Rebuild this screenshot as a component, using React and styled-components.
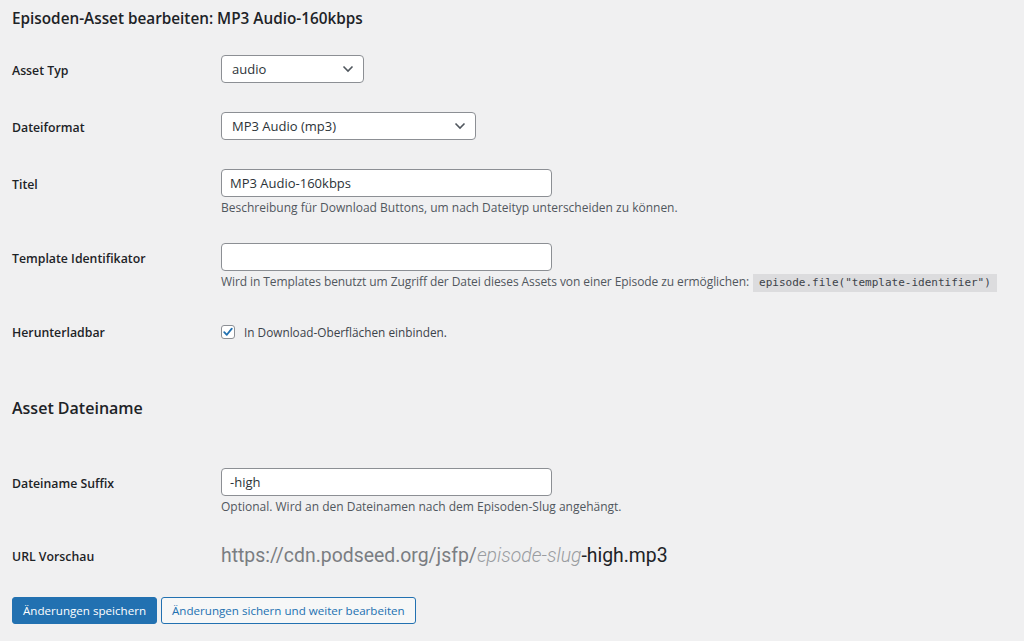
import React from "react";
import styled, { createGlobalStyle } from "styled-components";

const GlobalStyle = createGlobalStyle`
  html, body {
    margin: 0;
    padding: 0;
    background: #f0f0f1;
  }
  body {
    font-family: "Open Sans", "Noto Sans", sans-serif;
    font-size: 13px;
    color: #1d2327;
  }
`;

const Page = styled.div`
  padding: 6px 12px 20px 12px;
`;

const Title = styled.h1`
  margin: 0;
  font-size: 15.3px;
  line-height: 24px;
  font-weight: 600;
  color: #1d2327;
`;

const SectionTitle = styled.h2`
  margin: ${(p) => p.$gap}px 0 0 0;
  font-size: 16px;
  line-height: 24px;
  font-weight: 600;
  color: #1d2327;
`;

const Row = styled.div`
  display: grid;
  grid-template-columns: 209px 1fr;
  align-items: start;
  margin-top: ${(p) => p.$gap}px;
`;

const Label = styled.label`
  padding-top: 7px;
  font-size: 12.3px;
  line-height: 17px;
  font-weight: 600;
  color: #1d2327;
`;

const Field = styled.div`
  display: flex;
  flex-direction: column;
  align-items: flex-start;
`;

const SelectBox = styled.div`
  position: relative;
  box-sizing: border-box;
  width: ${(p) => p.$width}px;
  height: 28px;
  border: 1px solid #8c8f94;
  border-radius: 4px;
  background: #fff;
  display: flex;
  align-items: center;
  padding: 0 28px 0 10px;
  font-size: 13px;
  color: #2c3338;
`;

const Chevron = styled.svg`
  position: absolute;
  right: 9px;
  top: 50%;
  transform: translateY(-50%);
`;

const TextInput = styled.input`
  box-sizing: border-box;
  width: 331px;
  height: 28px;
  border: 1px solid #8c8f94;
  border-radius: 4px;
  background: #fff;
  padding: 0 8px;
  font-family: inherit;
  font-size: 13px;
  color: #2c3338;
  outline: none;
`;

const Description = styled.p`
  margin: 2px 0 0 0;
  height: 18px;
  font-size: 12px;
  line-height: 18px;
  color: #50575e;
  white-space: nowrap;
  letter-spacing: ${(p) => p.$tight ? "-0.08px" : "0"};
`;

const Code = styled.code`
  margin-left: 1px;
  padding: 2px 6px 3px;
  background: #dcdcde;
  font-family: "DejaVu Sans Mono", "Liberation Mono", monospace;
  font-size: 11px;
  letter-spacing: 0;
  color: #3c434a;
`;

const CheckLine = styled.label`
  display: flex;
  align-items: center;
  gap: 9px;
  height: 30px;
  font-size: 11.8px;
  color: #3c434a;
`;

const CheckBox = styled.span`
  box-sizing: border-box;
  width: 14px;
  height: 14px;
  border: 1px solid #8c8f94;
  border-radius: 3px;
  background: #fff;
  display: flex;
  align-items: center;
  justify-content: center;
`;

const UrlLine = styled.div`
  font-family: Roboto, "Liberation Sans", sans-serif;
  font-size: 19.4px;
  line-height: 30px;
  height: 30px;
  color: #7a7d82;
`;

const Slug = styled.span`
  font-style: italic;
  font-weight: 300;
  color: #9a9da1;
`;

const Suffix = styled.span`
  color: #1d2327;
`;

const Buttons = styled.div`
  display: flex;
  gap: 4px;
  margin-top: 26px;
`;

const Button = styled.button`
  box-sizing: border-box;
  height: 27px;
  padding: 0 10px;
  border-radius: 3px;
  border: 1px solid #2271b1;
  font-family: inherit;
  font-size: 11.6px;
  cursor: pointer;
  background: ${(p) => (p.$primary ? "#2271b1" : "#f6f7f7")};
  color: ${(p) => (p.$primary ? "#ffffff" : "#2271b1")};
`;

function Select({ value, width }) {
  return (
    <SelectBox $width={width}>
      {value}
      <Chevron width="12" height="8" viewBox="0 0 12 8" fill="none">
        <path d="M1.5 1.5L6 6L10.5 1.5" stroke="#50575e" strokeWidth="1.6" />
      </Chevron>
    </SelectBox>
  );
}

export default function App() {
  return (
    <Page>
      <GlobalStyle />
      <Title>Episoden-Asset bearbeiten: MP3 Audio-160kbps</Title>

      <Row $gap={25}>
        <Label>Asset Typ</Label>
        <Field>
          <Select value="audio" width={143} />
        </Field>
      </Row>

      <Row $gap={29}>
        <Label>Dateiformat</Label>
        <Field>
          <Select value="MP3 Audio (mp3)" width={255} />
        </Field>
      </Row>

      <Row $gap={29}>
        <Label>Titel</Label>
        <Field>
          <TextInput defaultValue="MP3 Audio-160kbps" />
          <Description>
            Beschreibung für Download Buttons, um nach Dateityp unterscheiden zu können.
          </Description>
        </Field>
      </Row>

      <Row $gap={26}>
        <Label>Template Identifikator</Label>
        <Field>
          <TextInput defaultValue="" />
          <Description $tight>
            Wird in Templates benutzt um Zugriff der Datei dieses Assets von einer Episode zu
            ermöglichen: <Code>episode.file("template-identifier")</Code>
          </Description>
        </Field>
      </Row>

      <Row $gap={26}>
        <Label>Herunterladbar</Label>
        <Field>
          <CheckLine>
            <CheckBox>
              <svg width="12" height="12" viewBox="0 0 12 12" fill="none">
                <path
                  d="M2.2 6.2L4.8 8.8L9.8 2.6"
                  stroke="#2271b1"
                  strokeWidth="1.8"
                  strokeLinecap="round"
                  strokeLinejoin="round"
                />
              </svg>
            </CheckBox>
            In Download-Oberflächen einbinden.
          </CheckLine>
        </Field>
      </Row>

      <SectionTitle $gap={49}>Asset Dateiname</SectionTitle>

      <Row $gap={48}>
        <Label>Dateiname Suffix</Label>
        <Field>
          <TextInput defaultValue="-high" />
          <Description>Optional. Wird an den Dateinamen nach dem Episoden-Slug angehängt.</Description>
        </Field>
      </Row>

      <Row $gap={25}>
        <Label>URL Vorschau</Label>
        <Field>
          <UrlLine>
            https://cdn.podseed.org/jsfp/<Slug>episode-slug</Slug>
            <Suffix>-high.mp3</Suffix>
          </UrlLine>
        </Field>
      </Row>

      <Buttons>
        <Button $primary>Änderungen speichern</Button>
        <Button>Änderungen sichern und weiter bearbeiten</Button>
      </Buttons>
    </Page>
  );
}
